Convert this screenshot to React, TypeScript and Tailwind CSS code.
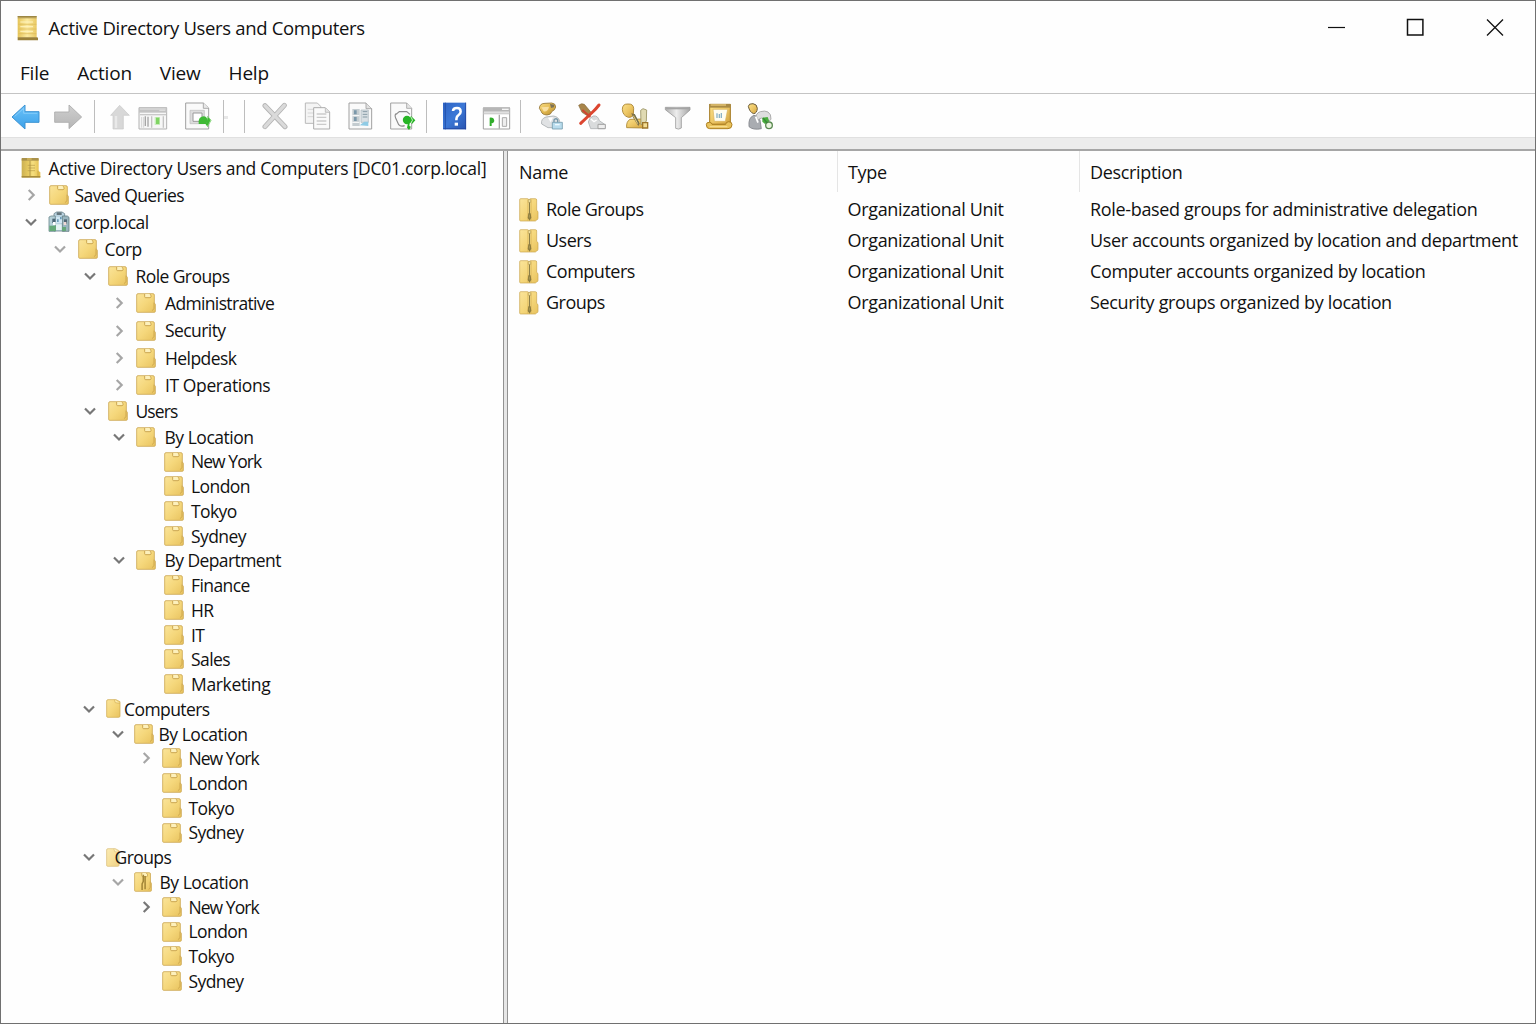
import React from "react";

/* ---------- window and tree icons ---------- */

function Folder({ w = 20, zip = false }: { w?: number; zip?: boolean }) {
  return (
    <svg width={w} height="20" viewBox="0 0 60 60" preserveAspectRatio="none" className="shrink-0">
      <path d="M2 6q0-4 4-4h45q4 0 4 4v24l3 4v21q0 3-3 3H5q-3 0-3-3z" fill="url(#folderFill)" stroke="#cba650" strokeWidth="2.4" />
      <path d="M26 3v8q0 3 3 3h13q3 0 3-3V7l-4-4" fill="#fdf0bb" stroke="#c49c42" strokeWidth="2.6" />
      <path d="M54 29v17l-5 7" fill="none" stroke="#c7a047" strokeWidth="2.4" />
      {zip && <path d="M31 8v20l-4 8v18M37 12v40" fill="none" stroke="#a18436" strokeWidth="5" />}
    </svg>
  );
}

function ZipFolder() {
  return (
    <svg width="20" height="24" viewBox="0 0 60 72" className="shrink-0">
      <path d="M2 5q0-3 3-3h21l4 3 4-3h15q4 0 4 4v31q4 2 4 6v18q0 4-4 5l-4 3H5q-3 0-3-3z" fill="url(#folderFill)" stroke="#c8a54c" strokeWidth="2" />
      <path d="M26 4v64M37 4v64" stroke="#d6b056" strokeWidth="1.5" />
      <path d="M31.5 10v42" stroke="#8b7d47" strokeWidth="3.6" />
      <path d="M28 46h7l2 13-5 9-6-8z" fill="#8c7b3e" />
      <path d="M28 5h7v8h-7z" fill="#f6e6a4" stroke="#a78c44" strokeWidth="1.5" />
      <path d="M31 50v9" stroke="#b9aa64" strokeWidth="2" />
    </svg>
  );
}

function ConsoleIcon() {
  return (
    <svg width="22" height="26" viewBox="0 0 66 78" className="shrink-0">
      <path d="M2 8h57v60H2z" fill="url(#scrollFill)" />
      <path d="M2 3h57v7H2z" fill="#b8a058" />
      <path d="M2 3h57v2H2z" fill="#8f7b3c" />
      <path d="M2 67h59l2 2v7H2z" fill="#9a813a" />
      <path d="M4 28h54M4 42h54M4 56h54" stroke="#dcb957" strokeWidth="2" />
      <path d="M10 21h38M10 35h38M10 49h38" stroke="#fff3bd" strokeWidth="3" />
    </svg>
  );
}

function RootIcon() {
  return (
    <svg width="20" height="22" viewBox="0 0 60 66" className="shrink-0">
      <path d="M2 6h51v36l5 4v15H2z" fill="url(#rootFill)" />
      <path d="M2 3h51v8H2z" fill="#a9914a" />
      <path d="M18 3h14v8H18z" fill="#c8ad58" />
      <path d="M2 57h56v5H2z" fill="#a88c3a" />
      <path d="M20 25h22M22 33h20M20 41h22" stroke="#b89c48" strokeWidth="2.5" opacity=".8" />
      <path d="M27 11v46" stroke="#a78c42" strokeWidth="4" opacity=".6" />
      <path d="M51 41v16" stroke="#c8a546" strokeWidth="2.5" />
    </svg>
  );
}

function DomainIcon() {
  return (
    <svg width="22" height="22" viewBox="0 0 66 66" className="shrink-0">
      <path d="M18 8l8-5h16l8 5v52H18z" fill="#bad4e2" stroke="#6d848c" strokeWidth="2.5" />
      <path d="M3 18l6-3h13v46H3z" fill="#b5d0d8" stroke="#6f8c91" strokeWidth="2.5" />
      <path d="M43 15h15l5 4v42H43z" fill="#9ab6bf" stroke="#667f84" strokeWidth="2.5" />
      <path d="M26 4h15v8H26z" fill="#65767d" />
      <path d="M24 18h18v18H24z" fill="#cfe6f2" />
      <path d="M13 23h9v13h-9z" fill="#4b6574" />
      <path d="M48 25h9v13h-9z" fill="#526875" />
      <path d="M27 25h5v8h-5zM36 18h5v7h-5z" fill="#6a9ab5" />
      <path d="M4 44h20v16H4z" fill="#65a978" />
      <path d="M24 40h17v17H24z" fill="#e3f2f1" />
      <path d="M42 48h12v12H42z" fill="#66a679" />
      <path d="M15 33h8v9h-8z" fill="#fff" />
      <path d="M47 33h8v9h-8z" fill="#f0d9d5" />
    </svg>
  );
}

function Chevron({ open, dark }: { open: boolean; dark?: boolean }) {
  return (
    <svg width="14" height="14" viewBox="0 0 14 14" className="shrink-0">
      <path
        d={open ? "M2 4.5 7 9.5 12 4.5" : "M4.7 2 9.7 7 4.7 12"}
        fill="none"
        stroke={dark ? "#777" : "#a6a6a6"}
        strokeWidth="2.2"
      />
    </svg>
  );
}

/* ---------- toolbar ---------- */

/* Icons are drawn on a grid of three units per pixel. */
function Tool({ x, w, className, children }: { x: number; w: number; className: string; children: React.ReactNode }) {
  return (
    <svg width={w} height="30" viewBox={`${x} 36 ${w * 3} 90`} className={`shrink-0 ${className}`}>
      {children}
    </svg>
  );
}

function Separator({ className }: { className: string }) {
  return <div className={`h-[33px] w-px shrink-0 -mt-[2px] bg-[#bdbdbd] ${className}`} />;
}

function Toolbar() {
  return (
    <div className="flex h-[43px] shrink-0 items-start bg-[#fefefe] pt-[8px]">
      <Tool x={33} w={30} className="ml-[10px]">
        <path d="M36 81 75 45v20h42v32H75v20z" fill="url(#blueFill)" stroke="#3c93d3" strokeWidth="3" strokeLinejoin="round" />
        <path d="M44 79 71 55v15h41" fill="none" stroke="#8ad0fb" strokeWidth="2.5" />
      </Tool>
      <Tool x={159} w={30} className="ml-[12px]">
        <path d="M164 66h43V45l38 36-38 35V97h-43z" fill="url(#grayFill)" stroke="#a9a9a9" strokeWidth="2.5" strokeLinejoin="round" />
      </Tool>
      <Separator className="ml-[11px]" />
      <Tool x={327} w={22} className="ml-[14px]">
        <path d="M359 46 388 76h-18v41h-31V76h-7z" fill="#d8d8d8" stroke="#c9c9c9" strokeWidth="2" />
        <path d="M348 78v36" stroke="#e9e9e9" strokeWidth="7" />
      </Tool>
      <Tool x={411} w={31} className="ml-[6px]">
        <path d="M417 53h83v64h-83z" fill="#f7f7f7" stroke="#b2b2b2" strokeWidth="3" />
        <path d="M417 52h83v16h-83z" fill="#c3c3c3" />
        <path d="M420 57h77M478 61h18" stroke="#e8e8e8" strokeWidth="2.5" />
        <path d="M420 74h78" stroke="#c9c9c9" strokeWidth="4" />
        <path d="M425 81v32M431 81v32" stroke="#d5d5d5" strokeWidth="3" />
        <path d="M436 79v29M444 80v30" stroke="#a6a6a6" strokeWidth="4" />
        <path d="M455 79v34M490 79v34" stroke="#c4c4c4" strokeWidth="4" />
        <path d="M464 81h16v24h-16z" fill="#c9edbc" />
        <path d="M468 83h10v19h-10z" fill="#7fd463" />
      </Tool>
      <Tool x={549} w={32} className="ml-[15px]">
        <path d="M557 39h53l16 15v63h-69z" fill="#fafafa" stroke="#a0a0a0" strokeWidth="3" />
        <path d="M610 39v16h16" fill="#e9e9e9" stroke="#a0a0a0" strokeWidth="2.5" />
        <path d="M570 61h43v40h-43z" fill="#ddd" stroke="#bbb" strokeWidth="2" />
        <path d="M579 69h27v25h-27z" fill="#fff" stroke="#9a9a9a" strokeWidth="3" />
        <path d="M596 94q0-10 9-14 8-3 13 1l4 6-2 15h-24z" fill="#3fba35" />
        <path d="m623 80 9 10-10 19-5-5 4-12z" fill="#3fba35" />
        <path d="m622 78 11 13-11 20" fill="none" stroke="#6fcf61" strokeWidth="2.5" />
      </Tool>
      <Separator className="ml-[8px]" />
      <div className="mt-[14px] h-[3px] w-[4px] bg-[#e7e7e7]" />
      <Separator className="ml-[16px]" />
      <Tool x={33} w={29} className="ml-[15.5px]">
        <path d="m45 47 60 63M103 46l-58 64" stroke="#b3b3b3" strokeWidth="15" strokeLinecap="round" />
        <path d="m45 47 60 63M103 46l-58 64" stroke="#dadada" strokeWidth="10" strokeLinecap="round" />
      </Tool>
      <Tool x={159} w={29} className="ml-[13px]">
        <path d="M166 39h36l10 10v51h-46z" fill="#f4f4f4" stroke="#b9b9b9" strokeWidth="3" />
        <path d="M173 58h20M173 69h20M173 80h20" stroke="#d6d6d6" strokeWidth="3" />
        <path d="M191 53h35l13 13v51h-48z" fill="#fafafa" stroke="#adadad" strokeWidth="3" />
        <path d="M226 54v13h12" fill="#e4e4e4" stroke="#aaa" strokeWidth="2" />
        <path d="M200 72h29M200 82h29M200 93h29M200 103h29" stroke="#cbcbcb" strokeWidth="4" />
      </Tool>
      <Tool x={288} w={30} className="ml-[14px]">
        <path d="M297 39h51l17 17v61h-68z" fill="#fafafa" stroke="#a0a0a0" strokeWidth="3" />
        <path d="M348 39v17h17" fill="#e1e1e1" stroke="#a0a0a0" strokeWidth="2.5" />
        <path d="M307 57h22v51h-22z" fill="#c4ccd0" />
        <path d="M312 61h8v12h-8zM312 81h8v12h-8z" fill="#7b98aa" />
        <path d="M333 60h22v37h-22z" fill="#d9e0e4" stroke="#a9b5bb" strokeWidth="2" />
        <path d="M338 65h14M338 73h14M338 81h14" stroke="#869aa4" strokeWidth="3" />
        <path d="m329 106 14-11h12v13z" fill="#8fcbe5" />
        <path d="M307 77h21M307 97h21" stroke="#fff" strokeWidth="3" />
      </Tool>
      <Tool x={414} w={31} className="ml-[12px]">
        <path d="M422 39h48l15 16v62h-63z" fill="#fafafa" stroke="#a2a2a2" strokeWidth="3" />
        <path d="M470 39v16h15" fill="#e5e5e5" stroke="#a2a2a2" strokeWidth="2.5" />
        <path d="M442 71q-10 0-5 13l9 20q6 7 18 3M437 74l11-9h22l10 8" fill="none" stroke="#8b8b8b" strokeWidth="3.5" />
        <circle cx="471" cy="90" r="12.5" fill="#26b425" />
        <path d="m483 78 13 13-10 11q-3-5-7-3l-1 9 5 2-6 10-6-7 3-13z" fill="#26b425" />
        <path d="M484 82q7 9-1 17" fill="none" stroke="#d7f4cf" strokeWidth="3" />
      </Tool>
      <Separator className="ml-[7.5px]" />
      <Tool x={573} w={28} className="ml-[14px]">
        <path d="M579 38h69v80h-69z" fill="url(#helpFill)" />
        <path d="M586 38v80" stroke="#2251ab" strokeWidth="3" />
        <path d="M580 116h68M647 38v80" stroke="#2347a0" strokeWidth="2.5" />
        <path d="M609 63q0-9 12-9 11 0 11 11 0 6-7 11-6 4-6 15" fill="none" stroke="#fff" strokeWidth="7.5" />
        <path d="M614 98h10v9h-10z" fill="#fff" />
      </Tool>
      <Tool x={693} w={31} className="ml-[12px]">
        <path d="M700 54h79v63h-79z" fill="#fff" stroke="#a0a0a0" strokeWidth="3" />
        <path d="M699 52h81v13h-81z" fill="#b6b6b6" />
        <path d="M756 58h20" stroke="#f5f5f5" strokeWidth="4" />
        <path d="M701 70h77" stroke="#d0d0d0" strokeWidth="6" />
        <path d="M748 74v42" stroke="#aaa" strokeWidth="4" />
        <path d="M719 83q13-2 14 10-2 8-8 6v9h-6z" fill="#31ad2c" />
        <path d="M757 83h13v26h-13z" fill="#eee" stroke="#aaa" strokeWidth="3" />
      </Tool>
      <Separator className="ml-[8px]" />

      {/* new user */}
      <Tool x={51} w={28} className="ml-[15.5px]">
        <path d="M65 102q-3-16 13-21l22-3q16 2 19 16l-3 19H84z" fill="#e0e2e4" stroke="#a9aeb1" strokeWidth="2.5" />
        <path d="M58 55q1-15 17-15l20-1q12 1 12 12-2 10-11 13-3 11-15 11-15-1-17-10z" fill="url(#goldFill)" stroke="#947537" strokeWidth="2.5" />
        <path d="m90 42 13 2-1 8-9 2z" fill="#7d7256" />
        <path d="m64 52 7 12q13 2 16-14z" fill="#f9dfa0" />
        <path d="m84 83 8 14 7-15z" fill="#fff" />
        <path d="M102 98v-8q5-7 11-1v9" fill="none" stroke="#7899ab" strokeWidth="4" />
        <path d="M97 97h30v20H97z" fill="#b9dced" stroke="#769caf" strokeWidth="2.5" />
        <path d="M105 104h14" stroke="#ecfaff" strokeWidth="4" />
      </Tool>
      {/* remove user */}
      <Tool x={171} w={31} className="ml-[12.5px]">
        <path d="M205 96q3-14 15-18 14-2 18 14l16 11v13h-42z" fill="#d9dbdc" stroke="#afb2b4" strokeWidth="2.5" />
        <path d="M176 46q8-8 17-3l20 24-8 12-19-12z" fill="#a8854a" stroke="#83683a" strokeWidth="2" />
        <path d="M182 100q20-19 36-34 9-8 19-21" fill="none" stroke="#dc4630" strokeWidth="9" strokeLinecap="round" />
        <path d="m187 60 24 21" fill="none" stroke="#cf4530" strokeWidth="6" />
        <path d="m212 86 10 9 8-5" fill="none" stroke="#fff" strokeWidth="4" />
        <path d="M234 103h22v13h-22z" fill="#eee" stroke="#a1a1a1" strokeWidth="3" />
      </Tool>
      {/* user with pencil */}
      <Tool x={300} w={31} className="ml-[12px]">
        <path d="M320 113q-2-18 10-25l34-1 6 27z" fill="url(#lightGold)" stroke="#a8842f" strokeWidth="2.5" />
        <path d="M307 58q0-17 17-16 16-1 17 13l-1 20q-6 9-15 7-17-5-18-24z" fill="url(#lightGold)" stroke="#a37d2b" strokeWidth="2.5" />
        <path d="m362 61 7-5 11 4-1 34-16 10z" fill="#e0dab2" stroke="#98905f" strokeWidth="2.5" />
        <path d="m334 69 9 4 16 28-4 7-17-27z" fill="#81724a" />
        <path d="m343 72 14 28" stroke="#6d6f4e" strokeWidth="3" />
        <path d="m340 77 13 24" stroke="#e1cd82" strokeWidth="3" />
        <path d="M368 98h15v16h-15z" fill="#f3dc92" stroke="#9d762b" strokeWidth="4" />
      </Tool>
      {/* filter */}
      <Tool x={429} w={29} className="ml-[12px]">
        <path d="M436 52h74v8l-26 23v31q-8 6-17 1V83l-31-24z" fill="url(#filterFill)" stroke="#9b9b9b" strokeWidth="2.5" />
        <path d="M438 56h69" stroke="#a4a4a4" strokeWidth="4" />
      </Tool>
      {/* scroll */}
      <Tool x={552} w={31} className="ml-[11.5px]">
        <path d="M569 43h62v60h-62z" fill="url(#lightGold)" stroke="#a3781f" strokeWidth="3" />
        <path d="M567 42h65v11h-65z" fill="#a98a45" />
        <path d="M572 45h46" stroke="#e9c977" strokeWidth="4" />
        <path d="M579 58h44l-7 36h-33z" fill="#fffdf1" stroke="#d9b25c" strokeWidth="2" />
        <path d="M591 70v14M598 72v12M604 69v15" stroke="#8cb3c6" strokeWidth="4" />
        <path d="M559 104q0-8 10-7 7 1 7 6h41q0-7 9-8 10 0 10 9 0 12-12 12h-55q-10 0-10-12z" fill="#e8c25c" stroke="#ad7f21" strokeWidth="3" />
        <path d="M569 110h53" stroke="#ffe8a0" strokeWidth="2.5" />
      </Tool>
      {/* group */}
      <Tool x={678} w={31} className="ml-[11.5px]">
        <path d="M687 110q-3-28 15-34 12 0 18 14l4 26q-25 5-37-6z" fill="#a9acb1" stroke="#7f8288" strokeWidth="2.5" />
        <path d="M709 75q4-8 12-10 14-4 23 1 10 6 9 22l-10 9-19-13-12 6z" fill="#dedede" stroke="#adadad" strokeWidth="3" />
        <path d="M685 49q1-9 14-8 12 1 13 14-1 15-11 16-12-4-16-22z" fill="url(#lightGold)" stroke="#6c5c3a" strokeWidth="3" />
        <path d="m707 80 7 18" stroke="#fff" strokeWidth="5" />
        <path d="m727 83 16-2 5 13-13 8-8-7z" fill="#4aad3d" />
        <circle cx="747" cy="106" r="10" fill="#eaf4df" stroke="#5b8a52" strokeWidth="4" />
        <path d="m729 84 13 15" stroke="#338a34" strokeWidth="3.5" />
      </Tool>
    </div>
  );
}

/* ---------- tree ---------- */

type Glyph = "root" | "domain" | "folder" | "zip" | "narrow" | "narrowPale";
type Node = {
  label: string;
  icon: number; // left edge of the icon
  text: number; // left edge of the label
  chevron?: number; // centre of the expander
  open?: boolean;
  dark?: boolean;
  glyph?: Glyph;
  tracking?: string;
};

const upper: Node[] = [
  { label: "Active Directory Users and Computers [DC01.corp.local]", icon: 21, text: 48.5, glyph: "root", tracking: "tracking-[-0.29px]" },
  { label: "Saved Queries", icon: 49, text: 74.5, chevron: 31 },
  { label: "corp.local", icon: 48, text: 74.5, chevron: 30.5, open: true, dark: true, glyph: "domain", tracking: "tracking-[-0.45px]" },
  { label: "Corp", icon: 78, text: 104.5, chevron: 60, open: true },
  { label: "Role Groups", icon: 108, text: 135.5, chevron: 89.5, open: true, dark: true },
  { label: "Administrative", icon: 136, text: 165, chevron: 119, tracking: "tracking-[-0.65px]" },
  { label: "Security", icon: 136, text: 165, chevron: 119 },
  { label: "Helpdesk", icon: 136, text: 165, chevron: 119 },
  { label: "IT Operations", icon: 136, text: 165, chevron: 119, tracking: "tracking-[-0.4px]" },
];

const newYork = "tracking-[-0.95px]";
const leaf = (label: string, tracking?: string): Node => ({ label, icon: 163.5, text: 191, tracking });
const site = (label: string, chevron?: number, dark?: boolean): Node => ({
  label,
  icon: 162,
  text: 188.5,
  chevron,
  dark,
  tracking: label === "New York" ? newYork : undefined,
});

const lower: Node[] = [
  { label: "By Location", icon: 136, text: 164.5, chevron: 118.5, open: true, dark: true, tracking: "tracking-[-0.48px]" },
  leaf("New York", newYork),
  leaf("London"),
  leaf("Tokyo"),
  leaf("Sydney"),
  { label: "By Department", icon: 136, text: 164.5, chevron: 118.5, open: true, dark: true },
  leaf("Finance"),
  leaf("HR"),
  leaf("IT"),
  leaf("Sales"),
  leaf("Marketing", "tracking-[-0.35px]"),
  { label: "Computers", icon: 106, text: 124, chevron: 89, open: true, dark: true, glyph: "narrow" },
  { label: "By Location", icon: 134, text: 158.5, chevron: 117.5, open: true, dark: true, tracking: "tracking-[-0.48px]" },
  site("New York", 145.5),
  site("London"),
  site("Tokyo"),
  site("Sydney"),
  { label: "Groups", icon: 106, text: 114.5, chevron: 88.5, open: true, dark: true, glyph: "narrowPale" },
  { label: "By Location", icon: 134, text: 159.5, chevron: 117.5, open: true, glyph: "zip", tracking: "tracking-[-0.48px]" },
  site("New York", 145.5, true),
  site("London"),
  site("Tokyo"),
  site("Sydney"),
];

const glyphWidth: Record<Glyph, number> = { root: 20, domain: 22, folder: 20, zip: 18, narrow: 15, narrowPale: 14 };

function NodeIcon({ glyph }: { glyph: Glyph }) {
  if (glyph === "root") return <RootIcon />;
  if (glyph === "domain") return <DomainIcon />;
  if (glyph === "zip") return <Folder w={18} zip />;
  if (glyph === "narrow" || glyph === "narrowPale")
    return (
      <svg width={glyphWidth[glyph]} height="19" viewBox="0 0 45 57" preserveAspectRatio="none" className={glyph === "narrow" ? "shrink-0" : "shrink-0 opacity-75"}>
        <path d="M2 6q0-4 4-4h24l12 6v43q0 4-4 4H5q-3 0-3-4z" fill="url(#folderFill)" stroke="#cfaa50" strokeWidth="2.2" />
        <path d="m25 2 3 9 14 2" fill="#fff0b4" stroke="#cfaa50" strokeWidth="2" />
      </svg>
    );
  return <Folder />;
}

function TreeRow({ node, height }: { node: Node; height: string }) {
  const glyph = node.glyph ?? "folder";
  const start = node.chevron !== undefined ? node.chevron - 7 : node.icon;
  return (
    <div className={`flex items-center whitespace-nowrap ${height}`} style={{ paddingLeft: start - 1 }}>
      {node.chevron !== undefined && (
        <span className="flex shrink-0" style={{ width: node.icon - start }}>
          <Chevron open={!!node.open} dark={node.dark} />
        </span>
      )}
      <NodeIcon glyph={glyph} />
      <span className={`relative z-10 ${node.tracking ?? "tracking-[-0.58px]"}`} style={{ marginLeft: node.text - node.icon - glyphWidth[glyph] }}>
        {node.label}
      </span>
    </div>
  );
}

/* ---------- list ---------- */

const rows = [
  ["Role Groups", "Role-based groups for administrative delegation"],
  ["Users", "User accounts organized by location and department"],
  ["Computers", "Computer accounts organized by location"],
  ["Groups", "Security groups organized by location"],
];

export default function App() {
  return (
    <div className="flex h-[1024px] w-[1536px] flex-col overflow-hidden border border-[#707070] bg-[#fefefe] font-['Open_Sans',sans-serif] text-[#111]">
      <svg width="0" height="0" className="absolute">
        <defs>
          <linearGradient id="folderFill" x1="0" y1="0" x2="1" y2="1">
            <stop offset="0" stopColor="#fae49a" />
            <stop offset=".5" stopColor="#f5d77b" />
            <stop offset="1" stopColor="#e8c25e" />
          </linearGradient>
          <linearGradient id="scrollFill" x1="0" y1="0" x2="1" y2="0">
            <stop offset="0" stopColor="#e5c458" />
            <stop offset=".5" stopColor="#fbeaa0" />
            <stop offset="1" stopColor="#e9c862" />
          </linearGradient>
          <linearGradient id="rootFill" x1="0" y1="0" x2="1" y2="0">
            <stop offset="0" stopColor="#cbb052" />
            <stop offset=".35" stopColor="#e6c95f" />
            <stop offset=".6" stopColor="#f6df7f" />
            <stop offset="1" stopColor="#e2bb48" />
          </linearGradient>
          <linearGradient id="goldFill" x1="0" y1="0" x2="1" y2="1">
            <stop offset="0" stopColor="#f8dc85" />
            <stop offset=".5" stopColor="#e3b94f" />
            <stop offset="1" stopColor="#b58a32" />
          </linearGradient>
          <linearGradient id="lightGold" x1="0" y1="0" x2="1" y2="1">
            <stop offset="0" stopColor="#fbe08a" />
            <stop offset=".5" stopColor="#edc765" />
            <stop offset="1" stopColor="#d1a240" />
          </linearGradient>
          <linearGradient id="blueFill" x1="0" y1="0" x2="0" y2="1">
            <stop offset="0" stopColor="#6cc3fa" />
            <stop offset="1" stopColor="#3ba0e8" />
          </linearGradient>
          <linearGradient id="grayFill" x1="0" y1="0" x2="0" y2="1">
            <stop offset="0" stopColor="#cfcfcf" />
            <stop offset="1" stopColor="#b5b5b5" />
          </linearGradient>
          <linearGradient id="helpFill" x1="0" y1="0" x2="1" y2="1">
            <stop offset="0" stopColor="#2e63c4" />
            <stop offset=".5" stopColor="#3c78d6" />
            <stop offset="1" stopColor="#2854b0" />
          </linearGradient>
          <linearGradient id="filterFill" x1="0" y1="0" x2="1" y2="0">
            <stop offset="0" stopColor="#b0b0b0" />
            <stop offset=".45" stopColor="#ededed" />
            <stop offset="1" stopColor="#a6a6a6" />
          </linearGradient>
        </defs>
      </svg>

      <header className="flex h-[53px] shrink-0 items-center pl-[15.5px]">
        <ConsoleIcon />
        <h1 className="ml-[10px] pt-px text-[18.5px] tracking-[-0.33px]">Active Directory Users and Computers</h1>
        <div className="mr-[30.5px] ml-auto flex items-center gap-[59.5px] pb-px">
          <svg width="20" height="20" viewBox="0 0 20 20"><path d="M2 10.5h17" stroke="#111" strokeWidth="1.2" /></svg>
          <svg width="20" height="20" viewBox="0 0 20 20"><path d="M2.5 2.5h15.4v15.4H2.5z" fill="none" stroke="#111" strokeWidth="1.5" /></svg>
          <svg width="20" height="20" viewBox="0 0 20 20"><path d="m2 2.5 16 16M18 2.5l-16 16" stroke="#111" strokeWidth="1.3" /></svg>
        </div>
      </header>

      <nav className="flex h-[39px] shrink-0 items-center gap-[28px] pl-[19px] text-[19px] tracking-[-0.2px]">
        <span>File</span>
        <span>Action</span>
        <span>View</span>
        <span>Help</span>
      </nav>
      <div className="h-px shrink-0 bg-[#c4c4c4]" />

      <Toolbar />
      <div className="h-[12px] shrink-0 border-t border-[#e0e0e0] bg-[#ececec]" />

      <main className="flex min-h-0 grow border-t-2 border-[#a6a6a6]">
        <aside className="w-[502px] shrink-0 pt-[3.2px] text-[17.5px]">
          {upper.map((node) => (
            <TreeRow key={node.label} node={node} height="h-[27.15px]" />
          ))}
          <TreeRow node={{ label: "Users", icon: 108, text: 135.5, chevron: 89.5, open: true, dark: true, tracking: "tracking-[-0.9px]" }} height="h-[26px]" />
          {lower.map((node, i) => (
            <TreeRow key={i} node={node} height="h-[24.74px]" />
          ))}
        </aside>
        <div className="flex w-[5px] shrink-0 justify-between bg-[#e6e6e6]">
          <div className="w-px bg-[#929292]" />
          <div className="w-px bg-[#929292]" />
        </div>
        <section className="grow text-[18px] tracking-[-0.335px]">
          <div className="flex h-[43px] items-start">
            <div className="flex h-[41px] w-[330px] items-center border-r border-[#e5e5e5] pt-[2px] pl-[11px]">Name</div>
            <div className="flex h-[41px] w-[242px] items-center border-r border-[#e5e5e5] pt-[2px] pl-[10px]">Type</div>
            <div className="flex h-[41px] items-center pt-[2px] pl-[10px]">Description</div>
          </div>
          {rows.map(([name, description]) => (
            <div key={name} className="flex h-[31px] items-center whitespace-nowrap">
              <div className="flex w-[330px] items-center gap-[7px] pl-[11px] tracking-[-0.5px]">
                <ZipFolder />
                {name}
              </div>
              <div className="w-[242px] pl-[9.5px]">Organizational Unit</div>
              <div className="pl-[10px]">{description}</div>
            </div>
          ))}
        </section>
      </main>
    </div>
  );
}
